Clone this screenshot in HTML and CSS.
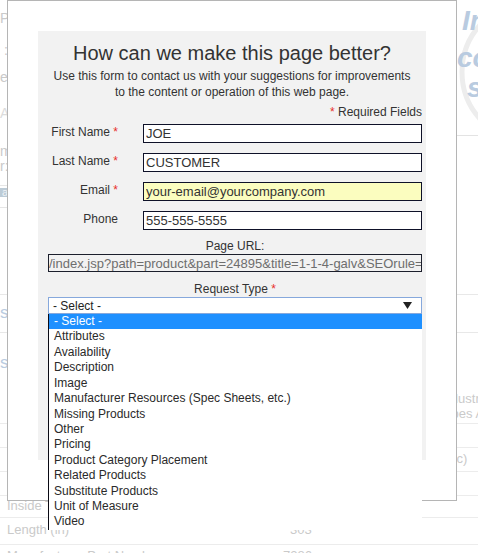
FILE: index.html
```html
<!DOCTYPE html>
<html>
<head>
  <meta http-equiv="Content-Type" content="text/html; charset=UTF-8">
  <title>Page Feedback</title>
  <link rel="stylesheet" href="styles.css">
</head>
<body>
  <div class="page">
    <div class="hero">
      <div class="side">
        <div class="frag f-p">P</div>
        <div class="frag f-colon">:</div>
        <div class="frag f-e">e:</div>
        <div class="frag f-a">A</div>
        <div class="frag f-m">m</div>
        <div class="frag f-r">r:</div>
        <div class="side-rule"></div>
        <div class="side-tag">a</div>
        <div class="side-rule low"></div>
      </div>
      <svg class="brand" width="80" height="136" viewBox="0 0 80 136">
        <circle cx="76" cy="72" r="70" fill="none" stroke="#ededed" stroke-width="5"/>
        <text x="6" y="30">In</text>
        <text x="1" y="67">co</text>
        <text x="11" y="97">s</text>
        <line x1="0" y1="135.5" x2="80" y2="135.5" stroke="#e3e3e3"/>
      </svg>
    </div>
    <div class="specs">
      <div class="spec-head"><span class="head-frag">s</span></div>
      <div class="spec-block">
        <span class="head-frag second">s</span>
        <span class="wide-val">Industrial<br>Pipes And</span>
      </div>
      <div class="spec-row"><span></span><span></span><span></span></div>
      <div class="spec-row"><span></span><span></span><span class="shift">(Zinc)</span></div>
      <div class="spec-row"><span></span><span></span><span></span></div>
      <div class="spec-row short"><span>Inside Thread</span><span></span><span></span></div>
      <div class="spec-row tall"><span>Length (in)</span><span class="val">303</span><span></span></div>
      <div class="spec-row"><span>Manufacturer Part Number</span><span>7286</span><span></span></div>
    </div>
  </div>

  <div class="modal">
    <div class="panel">
      <h2 class="title">How can we make this page better?</h2>
      <p class="intro">Use this form to contact us with your suggestions for improvements<br>to the content or operation of this web page.</p>
      <form class="feedback">
        <p class="req"><span class="star">*</span> Required Fields</p>
        <div class="row">
          <label>First Name <span class="star">*</span></label>
          <input type="text" value="JOE">
        </div>
        <div class="row">
          <label>Last Name <span class="star">*</span></label>
          <input type="text" value="CUSTOMER">
        </div>
        <div class="row">
          <label>Email <span class="star">*</span></label>
          <input type="text" class="filled" value="your-email@yourcompany.com">
        </div>
        <div class="row last">
          <label>Phone</label>
          <input type="text" value="555-555-5555">
        </div>
        <div class="field-label">Page URL:</div>
        <input type="text" class="url" readonly value="/index.jsp?path=product&amp;part=24895&amp;title=1-1-4-galv&amp;SEOrule=">
        <div class="field-label">Request Type <span class="star">*</span></div>
        <div class="combo">
          <div class="combo-box">
            <span>- Select -</span>
            <svg class="arrow" width="9" height="7" viewBox="0 0 9 7"><polygon points="0,0 9,0 4.5,7" fill="#222"/></svg>
          </div>
          <ul class="options">
            <li class="on">- Select -</li>
            <li>Attributes</li>
            <li>Availability</li>
            <li>Description</li>
            <li>Image</li>
            <li>Manufacturer Resources (Spec Sheets, etc.)</li>
            <li>Missing Products</li>
            <li>Other</li>
            <li>Pricing</li>
            <li>Product Category Placement</li>
            <li>Related Products</li>
            <li>Substitute Products</li>
            <li>Unit of Measure</li>
            <li>Video</li>
          </ul>
        </div>
      </form>
    </div>
  </div>
</body>
</html>
```

FILE: styles.css
```css
body {
  margin: 0;
  font-family: "Liberation Sans", Arial, sans-serif;
}
.page {
  position: relative;
  height: 553px;
  overflow: hidden;
  color: #cacaca;
  font-size: 13px;
}
.hero {
  display: flex;
  justify-content: space-between;
  height: 294px;
}
.side {
  width: 8px;
  padding-top: 10px;
  text-align: right;
  white-space: nowrap;
  line-height: 16px;
  font-size: 14px;
}
.f-colon { margin-top: 16px; }
.f-e { margin-top: 11px; }
.f-a { margin-top: 20px; color: #dcdcdc; }
.f-m { margin-top: 23px; line-height: 15px; }
.f-r { line-height: 15px; }
.side-rule {
  margin-top: 11px;
  border-top: 1px solid #e6e6e6;
}
.side-rule.low { margin-top: 10px; }
.side-tag {
  margin-top: 2px;
  height: 9px;
  line-height: 9px;
  background: #bccbd6;
  color: #eef2f5;
  font-size: 11px;
}
.brand {
  margin-right: -58px;
}
.brand text {
  font-family: "Liberation Sans", Arial, sans-serif;
  font-size: 28px;
  font-style: italic;
  font-weight: bold;
  fill: #b9cbe0;
}
.specs {
  border-top: 1px solid #e8e8e8;
}
.spec-head {
  height: 37px;
  padding-top: 8px;
  box-sizing: border-box;
}
.head-frag {
  display: block;
  width: 7px;
  color: #b9cbe0;
  font-size: 17px;
}
.spec-block {
  height: 91px;
  box-sizing: border-box;
  border-top: 1px solid #e8e8e8;
  position: relative;
}
.head-frag.second {
  padding-top: 20px;
}
.wide-val {
  position: absolute;
  left: 440px;
  top: 58px;
  line-height: 15px;
  white-space: nowrap;
}
.spec-row {
  display: grid;
  grid-template-columns: 283px 157px 1fr;
  height: 23px;
  line-height: 22px;
  border-top: 1px solid #ececec;
  white-space: nowrap;
}
.spec-row.short {
  height: 21px;
  line-height: 20px;
}
.spec-row.tall {
  height: 26px;
  line-height: 23px;
}
.spec-row span:first-child {
  padding-left: 7px;
}
.spec-row .val {
  padding-left: 7px;
}
.spec-row .shift {
  margin-left: -6px;
}

.modal {
  position: absolute;
  top: 0;
  left: 7px;
  width: 450px;
  height: 501px;
  box-sizing: border-box;
  padding: 30px;
  background: #fff;
  border: 1px solid #b5b5b5;
}
.panel {
  height: 429px;
  padding-top: 9px;
  box-sizing: border-box;
  background: #f2f2f2;
  color: #333;
}
.title {
  margin: 0;
  font-size: 20px;
  line-height: 26px;
  font-weight: normal;
  text-align: center;
}
.intro {
  margin: 2px 0 0;
  font-size: 12px;
  line-height: 16px;
  text-align: center;
}
.feedback {
  padding: 0 4px 0 10px;
  font-size: 12px;
}
.req {
  margin: 4px 0 4px;
  line-height: 16px;
  text-align: right;
}
.star {
  color: #e8302a;
}
.row {
  display: flex;
  align-items: flex-start;
  margin-bottom: 10px;
}
.row.last {
  margin-bottom: 9px;
}
.row label {
  width: 70px;
  margin-right: 25px;
  line-height: 16px;
  text-align: right;
  white-space: nowrap;
}
.row input {
  flex: 1;
  min-width: 0;
  height: 19px;
}
input {
  box-sizing: border-box;
  margin: 0;
  padding: 0 2px;
  border: 1px solid #0e1128;
  border-radius: 0;
  background: #fff;
  color: #333;
  font-family: "Liberation Sans", Arial, sans-serif;
  font-size: 13px;
  outline: none;
}
input.filled {
  background: #fbfdbf;
}
input.url {
  display: block;
  width: 100%;
  height: 18px;
  padding: 0;
  margin-bottom: 10px;
  background: transparent;
  color: #6e6e6e;
  border-color: #1c1f2c;
}
.field-label {
  line-height: 15px;
  text-align: center;
}
.combo {
  position: relative;
}
.combo-box {
  display: flex;
  justify-content: space-between;
  align-items: center;
  height: 17px;
  box-sizing: border-box;
  padding: 0 9px 0 4px;
  border: 1px solid #86a8dc;
  background: #fff;
  color: #222;
}
.arrow {
  display: block;
}
.options {
  position: absolute;
  top: 100%;
  left: 0;
  right: 0;
  margin: 0;
  padding: 0;
  list-style: none;
  background: #fff;
  border-left: 1px solid #0a0a14;
  color: #2a2a2a;
}
.options li {
  height: 15.43px;
  line-height: 15.43px;
  padding-left: 5px;
  white-space: nowrap;
}
.options li.on {
  background: #1e90ff;
  color: #fff;
}
```
